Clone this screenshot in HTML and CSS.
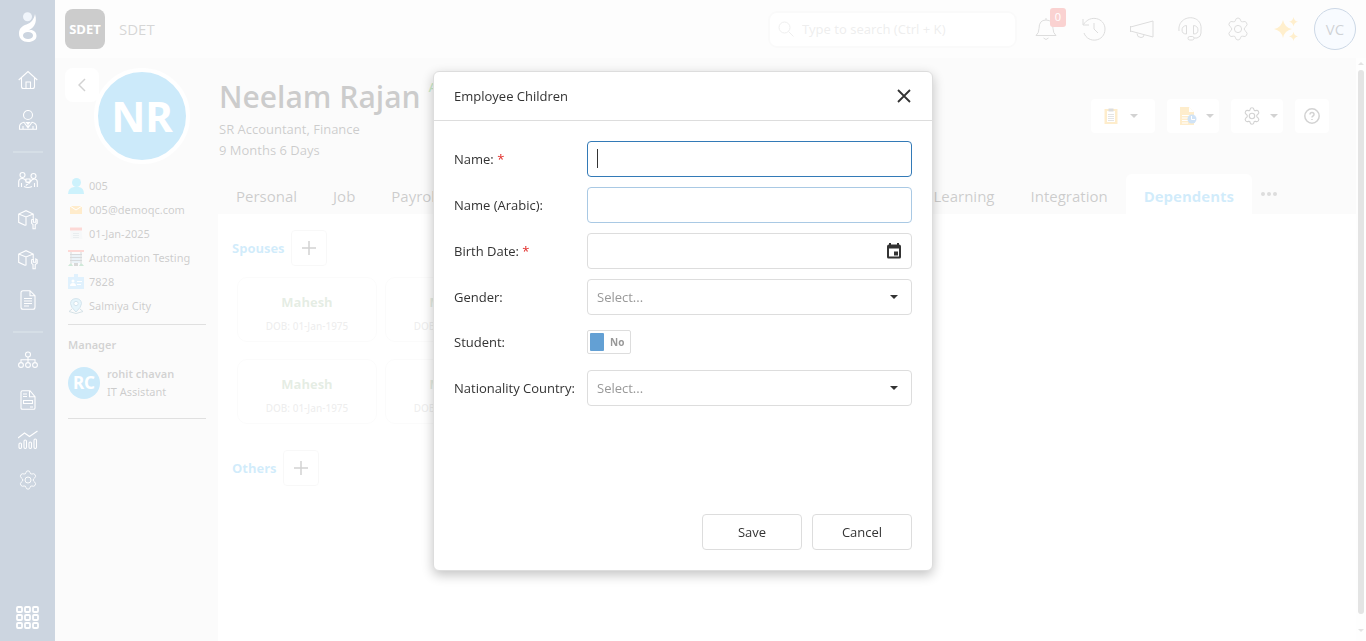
FILE: index.html
```
<!DOCTYPE html>
<html lang="en">
<head>
<meta charset="utf-8">
<meta name="viewport" content="width=device-width, initial-scale=1">
<title>Employee Children</title>
<link rel="stylesheet" href="styles.css">
</head>
<body>
<svg class="defs" aria-hidden="true">
  <symbol id="gear" viewBox="0 0 24 24"><path d="M9.500 3.200q.3-2.200 2.500-2.200t2.500 2.200q.3 2 2.200 1.600 2.600-1 3.800.8 1.400 2.200-.4 3.800-1.900 1.300-1.900 2.600t1.900 2.600q1.800 1.600.4 3.800-1.200 1.800-3.800.8-1.900-.4-2.200 1.600-.3 2.200-2.500 2.200t-2.500-2.200q-.3-2-2.200-1.600-2.600 1-3.800-.8-1.400-2.200.4-3.800 1.900-1.300 1.900-2.600T3.900 9.400Q2.100 7.800 3.500 5.600q1.200-1.800 3.800-.8 1.900.4 2.200-1.600z"/><circle cx="12" cy="12" r="3.600"/></symbol>
  <symbol id="box" viewBox="0 0 20 20"><path d="M7.500 15.500.7 12.300V4L8 .7 15.200 4v4M.7 4 8 7l7.200-3M8 7v8.500M13.600 9.800v3.500l1.400 1.200v4.300h2.200v-4.300l2-1.200V9.800l-1.400-.9v3.300h-2.400V8.900z"/></symbol>
  <symbol id="plus" viewBox="0 0 16 16"><path d="M8 1v14M1 8h14"/></symbol>
  <symbol id="caret" viewBox="0 0 8 4"><path d="M0 0h8L4 4z"/></symbol>
</svg>

<div class="app">
  <nav class="rail" aria-label="Main">
    <a class="rail-logo" href="#" aria-label="Start">
      <svg viewBox="0 0 20 32" width="20" height="32"><circle class="logo-dot" cx="9.500" cy="4.700" r="4.500"/><path class="solid" fill-rule="evenodd" d="M17 2C20 12 15 16.500 9 19c5-2.500 9.500.5 9.500 5C18.500 27.500 15 30 10 30S1 27 1 21.500C1 16.500 4 14 8.500 12.500 13 11 16 7.500 17 2zM10 20c-3 0-5 1.500-5 3.500C5 25.500 7 27 10 27s5-1.500 5-3.500S13 20 10 20z"/></svg>
    </a>
    <a class="rail-item" href="#" aria-label="Home"><svg viewBox="0 0 20 20"><path d="M.7 10 10 1.500 19.300 10M3.500 8v8.500q0 2 2 2h9q2 0 2-2V8M8 18v-6h4.500v6"/></svg></a>
    <a class="rail-item" href="#" aria-label="Employee"><svg viewBox="0 0 20 20"><circle cx="10" cy="5" r="4.500"/><path d="M1.500 19.300v-2.500q0-3.500 4.500-4.500l4 5.500 4-5.500q4.500 1 4.500 4.500v2.500zM10 18v-4l-1.500-1.500h3L10 14M5 19v-3M15 19v-3"/></svg></a>
    <hr class="rail-line">
    <a class="rail-item" href="#" aria-label="Teams"><svg viewBox="0 0 20 20"><circle cx="4.500" cy="5" r="2.500"/><circle cx="15.500" cy="6" r="2.500"/><path d="M.7 17v-5q0-3.500 3.500-3.500 3 0 4 3.500l3.500 1.500M19.300 17v-5q0-3-3-3-2.500 0-4 3l-4.500 3.500M6 16.500q4 2 8 0M8 9h4v3H8zM3.500 17v-4M16.500 17v-4"/></svg></a>
    <a class="rail-item" href="#" aria-label="Assets"><svg><use href="#box"/></svg></a>
    <a class="rail-item" href="#" aria-label="Services"><svg><use href="#box"/></svg></a>
    <a class="rail-item" href="#" aria-label="Documents"><svg viewBox="0 0 20 20"><path d="M5 .7h7l5 5V17q0 2.300-2 2.300H5q-2 0-2-2V3Q3 .7 5 .7zM12 .7v5h5M6 8.500h8M6 11h8M6 13.500h8M6 16h5"/></svg></a>
    <hr class="rail-line">
    <a class="rail-item" href="#" aria-label="Organization"><svg viewBox="0 0 20 20"><circle cx="10" cy="4.500" r="2.500"/><circle cx="3" cy="15" r="2.400"/><circle cx="10" cy="15" r="2.400"/><circle cx="17" cy="15" r="2.400"/><path d="M10 7v5M3 12V9.700h14V12"/></svg></a>
    <a class="rail-item" href="#" aria-label="Forms"><svg viewBox="0 0 20 20"><path d="M4.500.7H12l5 6V18q0 1.300-1.300 1.300h-11Q3 19.300 3 18V2.200Q3 .7 4.500.7zM11.500.7v6H17M5 4h4M5 6.500h4M5.500 10.500h9v3h-9zM12 17h3"/></svg></a>
    <a class="rail-item" href="#" aria-label="Reports"><svg viewBox="0 0 20 20"><path d="m0 8 6.500-5 5 3.500L19.500 1"/><rect x="1" y="13" width="2.500" height="5.500" rx="1.200"/><rect x="6" y="10" width="2.500" height="8.500" rx="1.200"/><rect x="11" y="12" width="2.500" height="6.500" rx="1.200"/><rect x="16" y="9" width="2.500" height="9.500" rx="1.200"/></svg></a>
    <a class="rail-item" href="#" aria-label="Settings"><svg><use href="#gear"/></svg></a>
    <a class="rail-apps" href="#" aria-label="All apps"><svg viewBox="0 0 24 24" width="24" height="24"><rect x="1" y="1" width="5" height="5" rx="1"/><rect x="9" y="1" width="5" height="5" rx="1"/><rect x="17" y="1" width="5" height="5" rx="1"/><rect x="1" y="9" width="5" height="5" rx="1"/><rect x="9" y="9" width="5" height="5" rx="1"/><rect x="17" y="9" width="5" height="5" rx="1"/><rect x="1" y="17" width="5" height="5" rx="1"/><rect x="9" y="17" width="5" height="5" rx="1"/><rect x="17" y="17" width="5" height="5" rx="1"/></svg></a>
  </nav>

  <div class="page">
    <header class="topbar">
      <span class="brand-mark">SDET</span>
      <span class="brand-name">SDET</span>
      <label class="search">
        <svg viewBox="0 0 16 16" width="16" height="16"><circle cx="6.500" cy="6.500" r="5.500"/><path d="m10.500 10.500 5 5"/></svg>
        <input class="search-input" type="search" placeholder="Type to search (Ctrl + K)" aria-label="Search">
      </label>
      <div class="tools">
        <button class="tool" type="button" aria-label="Notifications"><svg viewBox="0 0 24 24"><path d="M12 1v2M2 18.500q3-2.500 3-7 0-8.500 7-8.500t7 8.500q0 4.500 3 7zM9.500 21q2.500 3 5 0"/></svg><span class="badge">0</span></button>
        <button class="tool" type="button" aria-label="History"><svg viewBox="0 0 24 24"><path d="M1 2v6h6M1.500 7.500C8-3 23 1 23 12c0 13-17 15-21 4M12 6v6l4 4"/></svg></button>
        <button class="tool" type="button" aria-label="Announcements"><svg viewBox="0 0 24 24"><path d="M.5 9v6M.5 10 23 4v16L.5 14M7 16.500q0 4 4 4 3 0 3-2.500"/></svg></button>
        <button class="tool" type="button" aria-label="Support"><svg viewBox="0 0 24 24"><path d="M1 14C-1-3 25-4 23 13v3q0 4-4 5h-3"/><path d="M8.500 8.500v8.500Q4 17 4 13q0-4 4.500-4.500zM15.500 8.500v8.500q4.500 0 4.500-4 0-4-4.500-4.500z"/><rect x="10" y="19.500" width="6" height="3.500" rx="1.700"/></svg></button>
        <button class="tool" type="button" aria-label="Settings"><svg><use href="#gear"/></svg></button>
        <button class="tool tool-ai" type="button" aria-label="Assistant"><svg viewBox="0 0 24 24"><path d="M9 3q1.500 7.500 9 9-7.500 1.500-9 9-1.500-7.500-9-9 7.500-1.500 9-9zM19.500 0q.6 4 4.500 4.700-3.900.7-4.500 4.700-.6-4-4.500-4.700 3.900-.7 4.500-4.700zM19.500 14.800q.6 4 4.500 4.600-3.900.6-4.500 4.600-.6-4-4.500-4.600 3.900-.6 4.500-4.600z"/></svg></button>
      </div>
      <button class="user" type="button">VC</button>
    </header>

    <div class="body">
      <aside class="profile">
        <div class="profile-top">
          <button class="back" type="button" aria-label="Back"><svg viewBox="0 0 8 14" width="8" height="14"><path d="M7 1 1 7l6 6"/></svg></button>
          <span class="avatar">NR</span>
        </div>
        <ul class="facts">
          <li><svg viewBox="0 0 16 16"><circle cx="8.500" cy="4.500" r="4.500" fill="#06bdf0"/><path fill="#06bdf0" d="M0 16q0-6 6-7h5q5 1 5 7z"/></svg>005</li>
          <li><svg viewBox="0 0 16 16"><path fill="#ffa000" d="M2 4h12v8H2z"/><path d="m2 4 6 4 6-4" fill="none" stroke="#fff"/></svg>005@demoqc.com</li>
          <li><svg viewBox="0 0 16 16"><path fill="#d2dae0" d="M2.500 4h11l1 9h-12z"/><path fill="#f44336" d="M2 1.500h12v3H2z"/><path d="M5 7.500h6M5 9.500h6M5 11.500h6" stroke="#90a4ae"/></svg>01-Jan-2025</li>
          <li><svg viewBox="0 0 16 16"><path fill="#f44336" d="M0 0h16v2H0z"/><path d="M3 2v12M13 2v12M2 4.500h12M2 7.500h12M2 10.500h12" stroke="#37474f"/><path d="M4 6h8M4 9h8M4 12h8" stroke="#81b8d8" stroke-width="1.500"/><path fill="#158f42" d="M0 16q3-5 5 0zM11 16q2-5 5 0z"/><path fill="#444" d="M6 13h4v3H6z"/></svg>Automation Testing</li>
          <li><svg viewBox="0 0 16 16"><path fill="#64b9f6" d="M6 0h4v3h6v12H0V3h6z"/><circle cx="5" cy="7" r="1.500" fill="#fff"/><path fill="#fff" d="M2 12q0-3 3-3t3 3zM9 7h5v1H9zM9 10h4v1H9z"/></svg>7828</li>
          <li><svg viewBox="0 0 16 16"><path d="m4 11-3 2.500L8 15.500l7-2L12 11" fill="none" stroke="#2e6b85"/><path fill="#80caec" stroke="#2c79a0" d="M8 14Q2.500 9 2.500 5.500 3 .7 8 .6q5 .1 5.500 4.900Q13.500 9 8 14z"/><circle cx="8" cy="5.500" r="2.200" fill="#fff" stroke="#2c79a0"/></svg>Salmiya City</li>
        </ul>
        <section class="manager">
          <h2 class="manager-title">Manager</h2>
          <div class="manager-card">
            <span class="manager-avatar">RC</span>
            <div><div class="manager-name">rohit chavan</div><div>IT Assistant</div></div>
          </div>
        </section>
      </aside>

      <main class="main">
        <div class="hero">
          <div>
            <h1 class="name">Neelam Rajan <span class="status">Active</span></h1>
            <div class="sub">SR Accountant, Finance</div>
            <div class="sub">9 Months 6 Days</div>
          </div>
          <div class="actions">
            <button class="action action-wide" type="button" aria-label="Tasks"><svg viewBox="0 0 16 18" width="16" height="18"><path fill="#f9a602" d="M1.500 2h13v15h-13z"/><path fill="#fff" d="M4 4h8v11H4z"/><path fill="#555" d="M5.500 1.500h5v3h-5z"/><path d="M5 7.500h6M5 9.500h6M5 11.500h6M5 13.500h6" stroke="#777"/></svg><svg class="caret" width="8" height="4"><use href="#caret"/></svg></button>
            <button class="action" type="button" aria-label="Requests"><svg viewBox="0 0 18 20" width="18" height="20"><path fill="#f9a602" d="M1 1h9l5 5v13H1z"/><path fill="#fff" d="M10 1v5h5z"/><path d="M3 9.500h8M3 12h6M3 14.500h6M3 17h6" stroke="#fff"/><circle cx="13" cy="13" r="4.500" fill="#1673d1"/><path d="M12.500 10v3.500H16" stroke="#fff" fill="none"/></svg><svg class="caret" width="8" height="4"><use href="#caret"/></svg></button>
            <button class="action" type="button" aria-label="Options"><svg class="line-icon" width="18" height="18"><use href="#gear"/></svg><svg class="caret" width="8" height="4"><use href="#caret"/></svg></button>
            <button class="action action-help" type="button" aria-label="Help"><svg class="line-icon" viewBox="0 0 16 16" width="16" height="16"><circle cx="8" cy="8" r="7.200"/><path d="M6 6.500q0-2 2-2t2 2q0 1-1 1.500t-1 1.500M8 11v1"/></svg></button>
          </div>
        </div>
        <nav class="tabs" aria-label="Employee sections">
          <a class="tab" href="#">Personal</a>
          <a class="tab" href="#">Job</a>
          <a class="tab" href="#">Payroll</a>
          <a class="tab tab-late" href="#">Learning</a>
          <a class="tab" href="#">Integration</a>
          <a class="tab tab-active" href="#">Dependents</a>
          <button class="more" type="button" aria-label="More"><i></i><i></i><i></i></button>
        </nav>
        <div class="content">
          <div class="group-head"><h2 class="group-title">Spouses</h2><button class="add" type="button" aria-label="Add spouse"><svg width="16" height="16"><use href="#plus"/></svg></button></div>
          <div class="cards">
            <article class="card"><h3>Mahesh</h3><p>DOB: 01-Jan-1975</p></article>
            <article class="card"><h3>Mahesh</h3><p>DOB: 01-Jan-1975</p></article>
            <article class="card"><h3>Mahesh</h3><p>DOB: 01-Jan-1975</p></article>
            <article class="card"><h3>Mahesh</h3><p>DOB: 01-Jan-1975</p></article>
          </div>
          <div class="group-head"><h2 class="group-title">Others</h2><button class="add" type="button" aria-label="Add other"><svg width="16" height="16"><use href="#plus"/></svg></button></div>
        </div>
      </main>
      <div class="scroll" aria-hidden="true"><svg width="6" height="3" viewBox="0 0 8 4"><path d="M0 4h8L4 0z"/></svg><span class="thumb"></span><svg width="6" height="3"><use href="#caret"/></svg></div>
    </div>
  </div>
</div>

<div class="overlay">
  <form class="dialog" role="dialog" aria-labelledby="dialog-title">
    <header class="dialog-head">
      <h2 class="dialog-title" id="dialog-title">Employee Children</h2>
      <button class="close" type="button" aria-label="Close"><svg viewBox="0 0 14 14" width="14" height="14"><path d="m1 1 12 12M13 1 1 13"/></svg></button>
    </header>
    <div class="dialog-body">
      <div class="field"><label for="name">Name: <b class="req">*</b></label><div class="control control-active"><input class="box box-focus" id="name" type="text"></div></div>
      <div class="field"><label for="arabic">Name (Arabic):</label><input class="box box-hover" id="arabic" type="text"></div>
      <div class="field"><label for="birth">Birth Date: <b class="req">*</b></label><div class="control"><input class="box" id="birth" type="text"><svg class="control-icon date-icon" viewBox="0 0 14 16" width="14" height="16"><path fill-rule="evenodd" d="M2 0h2v1.500h6V0h2v1.500q2 0 2 2V14q0 1.500-1.500 1.500h-11Q0 15.500 0 14V3.500q0-2 2-2zM2 5.500v8h10v-8zM7 8.500h4v4H7z"/></svg></div></div>
      <div class="field"><label for="gender">Gender:</label><div class="control"><select class="box" id="gender"><option>Select...</option></select><svg class="control-icon" width="8" height="4"><use href="#caret"/></svg></div></div>
      <div class="field field-switch"><label for="student">Student:</label><label class="switch"><input type="checkbox" id="student"><span class="knob"></span>No</label></div>
      <div class="field"><label for="country">Nationality Country:</label><div class="control"><select class="box" id="country"><option>Select...</option></select><svg class="control-icon" width="8" height="4"><use href="#caret"/></svg></div></div>
    </div>
    <footer class="dialog-foot">
      <button class="btn" type="submit">Save</button>
      <button class="btn" type="button">Cancel</button>
    </footer>
  </form>
</div>
</body>
</html>
```
FILE: styles.css
```
* { box-sizing: border-box; }
body {
  margin: 0;
  font-family: "Open Sans", "Noto Sans", sans-serif;
  font-size: 13px;
  line-height: 18px;
  color: #333;
  overflow: hidden;
}
h1, h2, h3, p, ul { margin: 0; padding: 0; }
button, input, select { font: inherit; color: inherit; }
button { padding: 0; border: 0; background: none; }
a { color: inherit; text-decoration: none; }
svg { display: block; fill: none; flex: none; }
.defs { display: none; }

.app { display: flex; height: 100vh; }

/* Left rail */
.rail {
  width: 55px;
  flex: none;
  display: flex;
  flex-direction: column;
  align-items: center;
  background: #002d64;
  stroke: #fff;
}
.rail-logo { height: 60px; padding-top: 12px; }
.rail-logo svg { stroke: none; }
.logo-dot { fill: #b5cbe8; }
.solid { fill: #fff; }
.rail-item { width: 40px; height: 40px; display: grid; place-items: center; }
.rail-item svg { width: 20px; height: 20px; stroke-width: 1.1; }
.rail-line { width: 30px; height: 2px; margin: 11px 0 7px; border: 0; background: #315a84; }
.rail-apps { margin: auto 0 11px; stroke-width: 1.8; }

/* Top bar */
.page { flex: 1; min-width: 0; display: flex; flex-direction: column; }
.topbar {
  height: 58px;
  flex: none;
  display: flex;
  align-items: center;
  padding: 0 10px;
  background: #f5f5f5;
}
.brand-mark {
  width: 40px;
  height: 40px;
  display: grid;
  place-items: center;
  border-radius: 8px;
  background: #000;
  color: #fff;
  font-size: 13px;
  font-weight: 700;
}
.brand-name { margin-left: 14px; font-size: 15px; color: #333; }
.search {
  width: 249px;
  height: 37px;
  margin-left: auto;
  padding: 0 8px;
  display: flex;
  align-items: center;
  gap: 8px;
  border: 2px solid #e6e6e6;
  border-radius: 9px;
  background: #fff;
  stroke: #aaa;
}
.search-input {
  flex: 1;
  min-width: 0;
  padding: 0;
  border: 0;
  outline: 0;
  background: none;
  font-family: "Noto Sans", sans-serif;
  font-size: 13px;
}
.search-input::placeholder { color: #aaa; }
.tools { display: flex; gap: 24px; margin: 0 16px 0 17px; }
.tool { position: relative; width: 24px; height: 24px; stroke: #555; }
.tool svg { width: 24px; height: 24px; }
.tool-ai { fill: #ffaf05; stroke: none; }
.tool-ai svg { fill: inherit; }
.badge {
  position: absolute;
  top: -9px;
  right: -8px;
  width: 16px;
  height: 19px;
  border-radius: 3px;
  background: #e5211b;
  color: #fff;
  font-size: 11px;
}
.user {
  width: 42px;
  height: 42px;
  border: 1px solid #003a80;
  border-radius: 50%;
  background: #dcecff;
  color: #123;
  font-size: 15px;
}

/* Page body */
.body { flex: 1; min-height: 0; display: flex; background: #ebebeb; }
.profile {
  width: 163px;
  flex: none;
  padding: 10px;
  color: #000;
  font-family: "Noto Sans", sans-serif;
  font-size: 11px;
}
.profile-top { display: flex; }
.back {
  width: 34px;
  height: 34px;
  display: grid;
  place-items: center;
  border-radius: 8px;
  background: #fff;
  stroke: #222;
  stroke-width: 1.500;
}
.avatar {
  width: 96px;
  height: 96px;
  margin-left: -5px;
  display: grid;
  place-items: center;
  border: 4px solid #fff;
  border-radius: 50%;
  background: #0096e6;
  color: #fff;
  font-size: 42px;
  line-height: 44px;
  font-weight: 700;
}
.facts { margin: 10px 2px 0 3px; list-style: none; }
.facts li { height: 24px; display: flex; align-items: center; gap: 5px; white-space: nowrap; }
.facts svg { width: 16px; height: 16px; }
.manager { margin: 6px 2px 0 3px; padding: 11px 0 17px; border: solid #666; border-width: 1px 0; }
.manager-title { font-size: 11px; font-weight: 600; color: #222; }
.manager-card { display: flex; align-items: center; gap: 7px; margin-top: 11px; white-space: nowrap; }
.manager-avatar {
  width: 32px;
  height: 32px;
  flex: none;
  display: grid;
  place-items: center;
  border-radius: 50%;
  background: #0096e6;
  color: #fff;
  font-size: 17px;
  font-weight: 700;
}
.manager-name { font-weight: 600; color: #222; }

.main { flex: 1; min-width: 0; display: flex; flex-direction: column; }
.hero { display: flex; justify-content: space-between; align-items: flex-start; height: 116px; padding: 18px 27px 0 1px; }
.name { font-size: 30px; line-height: 44px; font-weight: 600; color: #000; white-space: nowrap; }
.status { color: #00a000; font-size: 13px; line-height: 18px; vertical-align: 16px; }
.sub { font-size: 13px; line-height: 21px; color: #000; }
.hero > div:first-child { margin-top: -1px; }
.actions { display: flex; gap: 12px; margin-top: 23px; }
.action {
  width: 52px;
  height: 34px;
  display: flex;
  align-items: center;
  justify-content: flex-end;
  gap: 9px;
  padding-right: 5px;
  border-radius: 4px;
  background: #fff;
}
.action-wide { width: 64px; gap: 11px; padding-right: 17px; }
.action-help { width: 34px; justify-content: center; padding: 0; }
.caret { fill: #222; }
.line-icon { stroke: #222; stroke-width: 1.500; }

.tabs { display: flex; height: 40px; padding-right: 79px; font-size: 15px; }
.tab { padding: 12px 18px 0; line-height: 20px; color: #000; }
.tab-late { margin-left: auto; }
.tab-active { border-radius: 6px 6px 0 0; background: #fff; color: #1b9fe9; font-weight: 700; }
.more { display: flex; gap: 2px; margin-left: 9px; padding-top: 18px; align-items: flex-start; }
.more i { width: 4px; height: 4px; border-radius: 50%; background: #555; }

.content { flex: 1; padding: 16px 14px; background: #fff; }
.group-head { display: flex; align-items: center; gap: 6px; }
.group-title { font-size: 13px; line-height: 20px; font-weight: 700; color: #1b9fe9; }
.add {
  width: 36px;
  height: 36px;
  display: grid;
  place-items: center;
  border: 1px solid #ddd;
  border-radius: 4px;
  stroke: #222;
  stroke-width: 1.500;
}
.cards { display: grid; grid-template-columns: 140px 140px; gap: 17px 8px; margin: 11px 5px 26px; }
.card { height: 65px; padding-top: 15px; border: 1px solid #e9e9e9; border-radius: 10px; text-align: center; }
.card h3 { font-size: 13px; font-weight: 700; color: #7fa57a; }
.card p { margin-top: 6px; font-family: "Noto Sans", sans-serif; font-size: 10px; font-weight: 500; color: #aaa; }

.scroll { width: 10px; display: flex; flex-direction: column; align-items: center; gap: 5px; padding: 4px 0 9px; background: #fafafa; }
.scroll svg { fill: #777; }
.thumb { flex: 1; width: 6px; margin-bottom: 10px; border-radius: 3px; background: #777; }

/* Dialog */
.overlay {
  position: fixed;
  inset: 0;
  display: flex;
  align-items: center;
  justify-content: center;
  background: rgba(255, 255, 255, .8);
}
.dialog {
  width: 500px;
  height: 500px;
  display: flex;
  flex-direction: column;
  border: 1px solid #ddd;
  border-radius: 6px;
  background: #fff;
  box-shadow: 0 4px 12px rgba(0, 0, 0, .24);
}
.dialog-head {
  height: 49px;
  display: flex;
  align-items: center;
  justify-content: space-between;
  padding: 0 21px 0 20px;
  border-bottom: 1px solid #ddd;
}
.dialog-title { font-size: 13px; line-height: 20px; font-weight: 400; }
.close { stroke: #333; stroke-width: 1.800; }
.dialog-body { flex: 1; display: flex; flex-direction: column; gap: 10px; padding: 20px; }
.field { display: grid; grid-template-columns: 133px 1fr; align-items: center; white-space: nowrap; }
.field-switch { height: 35px; }
.req { color: #e02b27; font-weight: 400; }
.control { position: relative; }
.control-active::after {
  content: "";
  position: absolute;
  left: 10px;
  top: 8px;
  width: 1px;
  height: 19px;
  background: #333;
}
.box {
  display: block;
  width: 100%;
  height: 36px;
  padding: 0 9px;
  border: 1px solid #ddd;
  border-radius: 4px;
  outline: 0;
  background: #fff;
  appearance: none;
}
select.box { color: #999; }
.box-focus { border-color: #337ab7; }
.box-hover { border-color: #a9c9e4; }
.control-icon { position: absolute; right: 14px; top: 16px; fill: #333; pointer-events: none; }
.date-icon { right: 11px; top: 10px; }
.switch {
  position: relative;
  width: 44px;
  height: 24px;
  display: flex;
  align-items: center;
  gap: 6px;
  padding-left: 2px;
  border: 1px solid #ddd;
  border-radius: 2px;
  font-size: 10px;
  font-weight: 700;
  color: #999;
}
.switch input { position: absolute; inset: 0; margin: 0; opacity: 0; }
.knob { width: 14px; height: 18px; border-radius: 1px; background: #63a0d4; }
.dialog-foot { display: flex; justify-content: flex-end; gap: 10px; padding: 0 20px 20px; }
.btn { width: 100px; height: 36px; border: 1px solid #ddd; border-radius: 4px; background: #fff; }
```
